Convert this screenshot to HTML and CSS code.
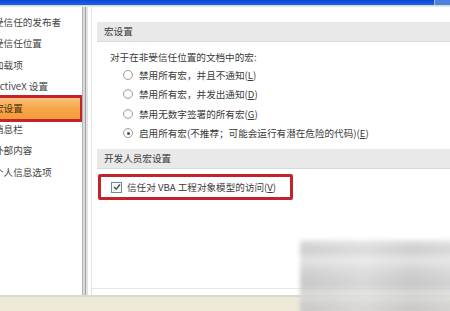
FILE: index.html
```html
<!DOCTYPE html>
<html lang="zh-CN">
<head>
<meta charset="utf-8">
<link rel="stylesheet" href="styles.css">
</head>
<body>
<div class="window">
  <div class="titlebar"><span class="tb-btn"></span></div>
  <div class="titleline"></div>
  <div class="main">
    <nav class="nav">
      <div class="nav-item">受信任的发布者</div>
      <div class="nav-item">受信任位置</div>
      <div class="nav-item">加载项</div>
      <div class="nav-item">ActiveX 设置</div>
      <div class="nav-item active">宏设置</div>
      <div class="nav-item">消息栏</div>
      <div class="nav-item">外部内容</div>
      <div class="nav-item">个人信息选项</div>
    </nav>
    <div class="divider"></div>
    <section class="panel">
      <div class="panel-inner">
        <div class="group-head">宏设置</div>
        <div class="desc">对于在非受信任位置的文档中的宏:</div>
        <div class="radio-row"><span class="radio"></span><span>禁用所有宏，并且不通知(<u>L</u>)</span></div>
        <div class="radio-row"><span class="radio"></span><span>禁用所有宏，并发出通知(<u>D</u>)</span></div>
        <div class="radio-row"><span class="radio"></span><span>禁用无数字签署的所有宏(<u>G</u>)</span></div>
        <div class="radio-row"><span class="radio checked"></span><span>启用所有宏(不推荐；可能会运行有潜在危险的代码)(<u>E</u>)</span></div>
        <div class="group-head second">开发人员宏设置</div>
        <div class="check-box-row">
          <span class="checkbox">
            <svg width="8" height="8" viewBox="0 0 8 8"><path d="M1 4 L3.2 6.2 L7 1.5" fill="none" stroke="#3f5a40" stroke-width="1.4"/></svg>
          </span>
          <span>信任对 VBA 工程对象模型的访问(<u>V</u>)</span>
        </div>
      </div>
    </section>
  </div>
  <div class="statusbar"></div>
  <div class="watermark"></div>
</div>
</body>
</html>
```
FILE: styles.css
```css
* { box-sizing: border-box; }
html, body { margin: 0; padding: 0; }
body {
  width: 450px;
  height: 311px;
  overflow: hidden;
  background: #ffffff;
  font-family: "Noto Sans CJK SC", "Noto Sans", sans-serif;
  font-size: 9.6px;
  color: #3a3a3a;
}
.window {
  position: relative;
  width: 450px;
  height: 311px;
  display: flex;
  flex-direction: column;
  overflow: hidden;
}
.titlebar {
  height: 5px;
  background: linear-gradient(#0a47d4, #1f62ea);
  position: relative;
}
.tb-btn {
  position: absolute;
  right: 0;
  top: 0;
  width: 16px;
  height: 5px;
  background: #4f7fe0;
  border-left: 1px solid #9fb8ee;
}
.titleline {
  height: 2px;
  background: linear-gradient(#c9d4c7, #eef1ec);
}
.main {
  display: flex;
  height: 288px;
}
.nav {
  width: 82px;
  background: #ffffff;
  padding-top: 5px;
  overflow: hidden;
}
.nav-item {
  height: 21.4px;
  line-height: 21.4px;
  margin-left: -6px;
  padding-left: 0;
  white-space: nowrap;
  color: #444;
}
.nav-item.active {
  margin-left: 0;
  text-indent: -6px;
  width: 80px;
  background: linear-gradient(#fbc37b, #f6a549 50%, #f39c3c);
  box-shadow: 0 0 0 3px #c3242b;
  color: #4a3010;
  position: relative;
}
.divider {
  width: 10px;
  background: linear-gradient(to right,
    #b5b5b5 0, #b5b5b5 1px,
    #d9d9d9 1px, #d9d9d9 3px,
    #a3a3a3 3px, #a3a3a3 4px,
    #e2e2e2 4px, #e2e2e2 6px,
    #ffffff 6px, #ffffff 9px,
    #e2e2e2 9px, #e2e2e2 10px);
}
.panel {
  flex: 1;
  background: #ffffff;
  padding-top: 15px;
  padding-left: 5px;
  border-bottom: 1px solid #e6e6e6;
  margin-bottom: 6px;
}
.panel-inner {
  display: flex;
  flex-direction: column;
}
.group-head {
  height: 20px;
  line-height: 19px;
  background: #e9e9e9;
  border-bottom: 1px solid #d9d9d9;
  padding-left: 7px;
  color: #3a3a3a;
}
.group-head.second {
  margin-top: 6px;
}
.desc {
  height: 16px;
  line-height: 16px;
  margin-top: 7px;
  padding-left: 13px;
  color: #3a3a3a;
}
.radio-row {
  display: flex;
  align-items: center;
  height: 19.5px;
  padding-left: 26px;
  gap: 6px;
  white-space: nowrap;
  color: #3a3a3a;
}
.radio {
  width: 10px;
  height: 10px;
  border-radius: 50%;
  border: 1px solid #a0a0a0;
  background: radial-gradient(circle, #ffffff 40%, #ececec 100%);
  flex: none;
  position: relative;
}
.radio.checked::after {
  content: "";
  position: absolute;
  left: 2.5px;
  top: 2.5px;
  width: 3px;
  height: 3px;
  border-radius: 50%;
  background: #4a4a4a;
}
.check-box-row {
  margin-top: 5px;
  margin-left: 1px;
  width: 195px;
  height: 26px;
  border: 3px solid #c3242b;
  border-radius: 2px;
  display: flex;
  align-items: center;
  padding-left: 10px;
  gap: 5px;
  white-space: nowrap;
  color: #3a3a3a;
}
.checkbox {
  width: 11px;
  height: 11px;
  border: 1px solid #6d88a8;
  background: #f6f8f6;
  display: flex;
  align-items: center;
  justify-content: center;
  flex: none;
}
.statusbar {
  flex: 1;
  background: #efe9d9;
  border-top: 2px solid #d9dcc6;
}
.watermark {
  position: absolute;
  left: 300px;
  top: 240px;
  width: 160px;
  height: 80px;
  background:
    linear-gradient(to right, rgba(255,255,255,0) 0, rgba(255,255,255,0.3) 40%, rgba(255,255,255,0) 70%, rgba(255,255,255,0.25) 100%),
    linear-gradient(#dcdcdc 0, #c4c4c4 12%, #dedede 25%, #c8c8c8 40%, #bdbdbd 55%, #d6d6d6 70%, #c2c2c2 85%, #d0d0d0 100%);
  filter: blur(2px);
  opacity: 0.85;
}
```
